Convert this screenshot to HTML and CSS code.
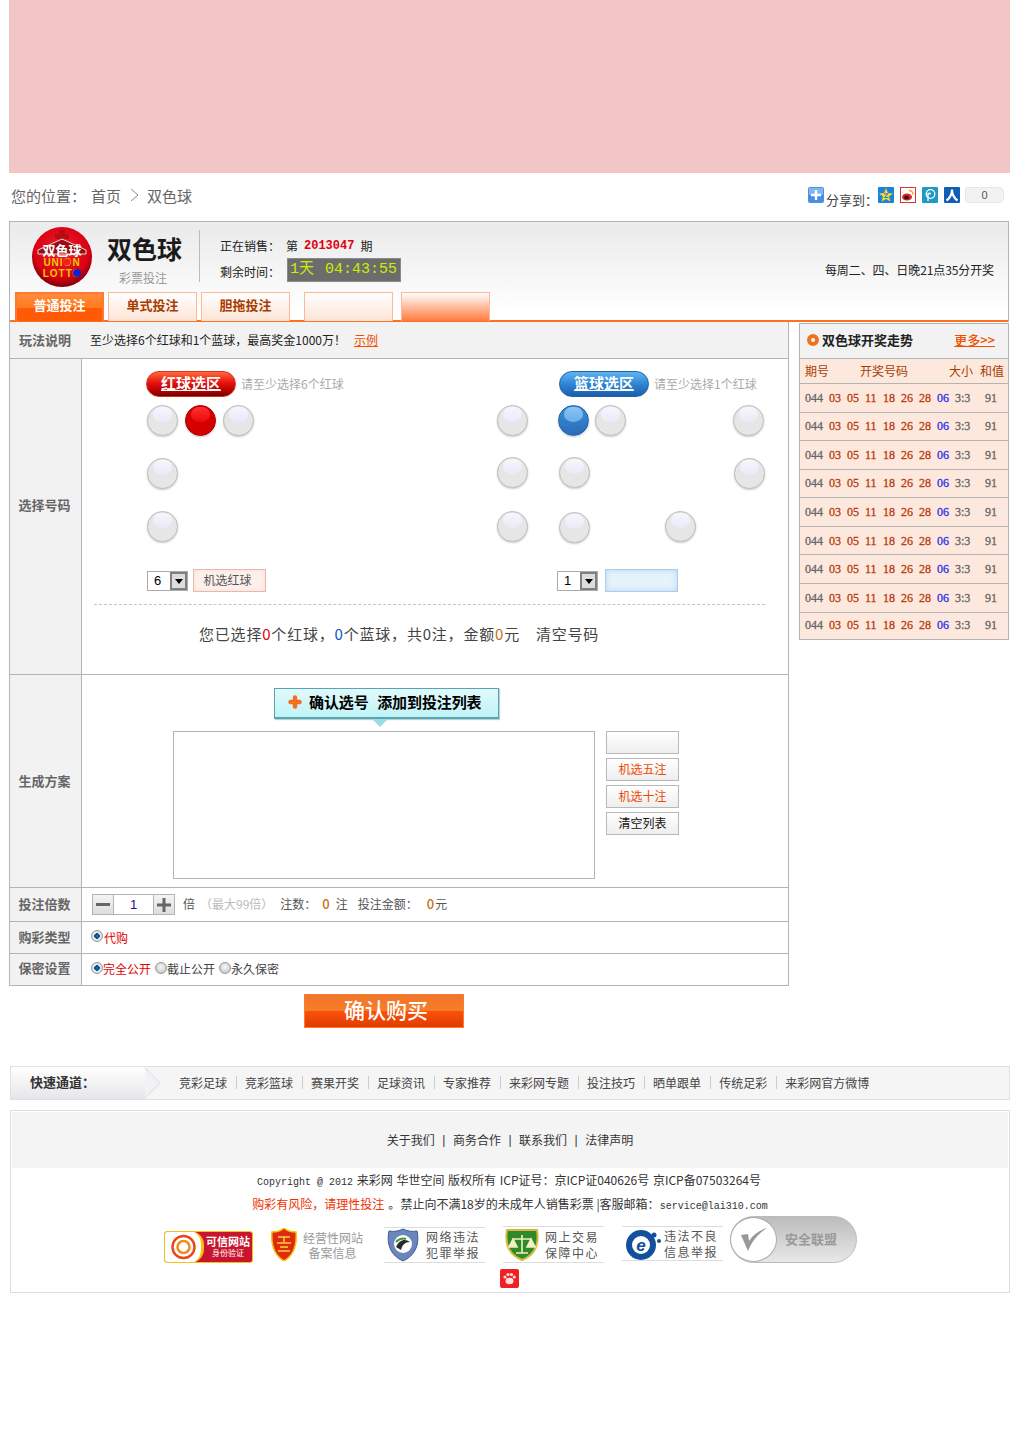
FILE: index.html
```html
<!DOCTYPE html>
<html lang="zh-CN">
<head>
<meta charset="utf-8">
<title>双色球</title>
<link rel="stylesheet" href="styles.css">
</head>
<body>
<div class="wrap">
  <div class="banner"></div>

  <div class="crumbs">
    <div class="path"><span>您的位置：</span><a>首页</a>
      <svg class="chev" width="10" height="14" viewBox="0 0 10 14"><path d="M1 1l7 6-7 6" fill="none" stroke="#888"/></svg>
      <a>双色球</a></div>
    <div class="share">
      <svg class="ico plus" width="16" height="16" viewBox="0 0 16 16"><rect width="16" height="16" rx="2" fill="#4a90e2"/><rect x="1" y="1" width="14" height="7" fill="#7fb6f2"/><path d="M8 3v10M3 8h10" stroke="#fff" stroke-width="2.4"/></svg>
      <span class="share-label">分享到：</span>
      <svg class="ico" width="16" height="16" viewBox="0 0 16 16"><rect width="16" height="16" rx="1" fill="#1c84d8"/><path d="M8 1l2 5 5 .4-4 3.2 1.4 5L8 12l-4.400 2.600L5 9.600 1 6.400 6 6z" fill="#ffd22e"/><path d="M6 6.800h4L6.500 10.500h3.800" fill="none" stroke="#1c84d8"/></svg>
      <svg class="ico" width="16" height="16" viewBox="0 0 16 16"><rect x=".5" y=".5" width="15" height="15" fill="#fff" stroke="#d33"/><ellipse cx="7" cy="10" rx="5" ry="3.600" fill="#e0242c"/><ellipse cx="6.500" cy="10.500" rx="2.500" ry="1.900" fill="#222"/><path d="M9 3.500a4 4 0 0 1 4 4" fill="none" stroke="#f29a1f" stroke-width="1.500"/></svg>
      <svg class="ico" width="16" height="16" viewBox="0 0 16 16"><rect width="16" height="16" rx="1" fill="#1f9ac4"/><circle cx="8.500" cy="7" r="4.300" fill="none" stroke="#fff" stroke-width="1.300"/><path d="M6 14V6.500h3" fill="none" stroke="#fff" stroke-width="1.300"/></svg>
      <svg class="ico" width="16" height="16" viewBox="0 0 16 16"><rect width="16" height="16" rx="1" fill="#0f5fb4"/><path d="M8 2.500C8 8 6 11 2.500 13.500M8 2.500c0 5.500 2 8.500 5.500 11" fill="none" stroke="#fff" stroke-width="2.200"/></svg>
      <span class="count">0</span>
    </div>
  </div>

  <header class="lottery">
    <div class="lottery-top">
      <svg class="logo" width="62" height="62" viewBox="0 0 62 62">
        <defs><radialGradient id="lg" cx=".5" cy=".4" r=".6"><stop offset="0" stop-color="#f2232e"/><stop offset=".75" stop-color="#d90012"/><stop offset="1" stop-color="#7d0008"/></radialGradient></defs>
        <circle cx="31" cy="31" r="30" fill="url(#lg)"/>
        <path d="M28 4h6v4h4v5h-4v4h-6v-4h-4V8h4z" fill="#b80c14"/>
        <path d="M7 24L31 13l24 11v4H7z" fill="#9c0c12" stroke="#ddd"/>
        <text x="31" y="29" class="logo-cn">双色球</text>
        <text x="31" y="40" class="logo-en">UNION</text>
        <text x="31" y="51" class="logo-en">LOTTO</text>
        <circle cx="36" cy="36" r="3.500" fill="#f02020"/>
        <circle cx="46" cy="47" r="4" fill="#1020d0"/>
      </svg>
      <div class="title"><h1>双色球</h1><p>彩票投注</p></div>
      <div class="sale">
        <div class="sale-row"><span class="sale-label">正在销售：</span><span>第</span><b class="issue">2013047</b><span>期</span></div>
        <div class="sale-row"><span class="sale-label">剩余时间：</span><span class="timer">1天 04:43:55</span></div>
      </div>
      <div class="draw">每周二、四、日晚21点35分开奖</div>
    </div>
    <nav class="tabs">
      <a class="tab on">普通投注</a>
      <a class="tab">单式投注</a>
      <a class="tab">胆拖投注</a>
      <a class="tab blank t4"></a>
      <a class="tab fade t5"></a>
    </nav>
  </header>

  <div class="main">
    <section class="form">
      <div class="row r-rule">
        <div class="label">玩法说明</div>
        <div class="cell rule"><span>至少选择6个红球和1个蓝球，最高奖金1000万！</span><a class="link">示例</a></div>
      </div>

      <div class="row r-pick">
        <div class="label">选择号码</div>
        <div class="cell pick">
          <div class="pick-head">
            <div class="pick-title red-title"><span class="pill pill-red">红球选区</span><span class="hint">请至少选择6个红球</span></div>
            <div class="pick-title"><span class="pill pill-blue">篮球选区</span><span class="hint">请至少选择1个红球</span></div>
          </div>
          <div class="balls">
            <i class="ball c1 l1"></i><i class="ball red c2 l1"></i><i class="ball c3 l1"></i><i class="ball c4 l1"></i><i class="ball blue c5 l1"></i><i class="ball c6 l1"></i><i class="ball c8 l1"></i>
            <i class="ball c1 l2"></i><i class="ball c4 l2 up"></i><i class="ball c5 l2 up right"></i><i class="ball c8 l2 right"></i>
            <i class="ball c1 l3"></i><i class="ball c4 l3"></i><i class="ball c5 l3 down right"></i><i class="ball c7 l3"></i>
          </div>
          <div class="controls">
            <div class="control red-control"><span class="select">6<i class="arrow"></i></span><a class="rand">机选红球</a></div>
            <div class="control"><span class="select">1<i class="arrow"></i></span><a class="rand rand-blue"></a></div>
          </div>
          <div class="dash"></div>
          <p class="summary">您已选择<em class="c-red">0</em>个红球，<em class="c-blue">0</em>个蓝球，共0注，金额<em class="c-org">0</em>元<a class="clear">清空号码</a></p>
        </div>
      </div>

      <div class="row r-gen">
        <div class="label">生成方案</div>
        <div class="cell gen">
          <a class="confirm-pick">
            <svg width="14" height="14" viewBox="0 0 14 14"><path d="M7 2.500v9M2.500 7h9" stroke="#f07020" stroke-width="4.500" stroke-linecap="round"/></svg>
            <span>确认选号&nbsp;&nbsp;添加到投注列表</span>
          </a>
          <div class="gen-body">
            <div class="list"></div>
            <div class="gen-btns">
              <a class="gbtn"></a>
              <a class="gbtn org">机选五注</a>
              <a class="gbtn org">机选十注</a>
              <a class="gbtn">清空列表</a>
            </div>
          </div>
        </div>
      </div>

      <div class="row r-mult">
        <div class="label">投注倍数</div>
        <div class="cell mult">
          <div class="stepper">
            <span class="step"><svg width="14" height="4" viewBox="0 0 14 4"><rect width="14" height="3" fill="#666"/></svg></span>
            <span class="num">1</span>
            <span class="step"><svg width="14" height="14" viewBox="0 0 14 14"><path d="M7 0v14M0 7h14" stroke="#666" stroke-width="3"/></svg></span>
          </div>
          <span class="m1">倍</span><span class="m2">（最大99倍）</span><span class="m3">注数：</span><em class="c-org m4">0</em><span class="m5">注</span><span class="m6">投注金额：</span><em class="c-org m7">0</em><span class="m8">元</span>
        </div>
      </div>

      <div class="row r-type">
        <div class="label">购彩类型</div>
        <div class="cell radios"><i class="radio on"></i><span class="c-red">代购</span></div>
      </div>

      <div class="row r-secret">
        <div class="label">保密设置</div>
        <div class="cell radios"><i class="radio on"></i><span class="c-red">完全公开</span><i class="radio gapl"></i><span>截止公开</span><i class="radio gapl"></i><span>永久保密</span></div>
      </div>
    </section>

    <aside class="trend">
      <div class="trend-head">
        <h2><i class="dot"></i>双色球开奖走势</h2><a class="more">更多&gt;&gt;</a>
      </div>
      <div class="trend-cols"><span class="tc1">期号</span><span class="tc2">开奖号码</span><span class="tc3">大小</span><span class="tc4">和值</span></div>
      <div class="trend-rows">
        <div class="tr"><b class="n3">044</b><b>03</b><b>05</b><b>11</b><b>18</b><b>26</b><b>28</b><b class="bl">06</b><b class="n3">3:3</b><b class="sum">91</b></div>
        <div class="tr"><b class="n3">044</b><b>03</b><b>05</b><b>11</b><b>18</b><b>26</b><b>28</b><b class="bl">06</b><b class="n3">3:3</b><b class="sum">91</b></div>
        <div class="tr"><b class="n3">044</b><b>03</b><b>05</b><b>11</b><b>18</b><b>26</b><b>28</b><b class="bl">06</b><b class="n3">3:3</b><b class="sum">91</b></div>
        <div class="tr"><b class="n3">044</b><b>03</b><b>05</b><b>11</b><b>18</b><b>26</b><b>28</b><b class="bl">06</b><b class="n3">3:3</b><b class="sum">91</b></div>
        <div class="tr"><b class="n3">044</b><b>03</b><b>05</b><b>11</b><b>18</b><b>26</b><b>28</b><b class="bl">06</b><b class="n3">3:3</b><b class="sum">91</b></div>
        <div class="tr"><b class="n3">044</b><b>03</b><b>05</b><b>11</b><b>18</b><b>26</b><b>28</b><b class="bl">06</b><b class="n3">3:3</b><b class="sum">91</b></div>
        <div class="tr"><b class="n3">044</b><b>03</b><b>05</b><b>11</b><b>18</b><b>26</b><b>28</b><b class="bl">06</b><b class="n3">3:3</b><b class="sum">91</b></div>
        <div class="tr"><b class="n3">044</b><b>03</b><b>05</b><b>11</b><b>18</b><b>26</b><b>28</b><b class="bl">06</b><b class="n3">3:3</b><b class="sum">91</b></div>
        <div class="tr"><b class="n3">044</b><b>03</b><b>05</b><b>11</b><b>18</b><b>26</b><b>28</b><b class="bl">06</b><b class="n3">3:3</b><b class="sum">91</b></div>
      </div>
    </aside>
  </div>

  <div class="buy-row"><a class="buy">确认购买</a></div>

  <div class="quick">
    <div class="quick-title">快速通道：</div>
    <div class="quick-links">
      <a>竞彩足球</a><a>竞彩篮球</a><a>赛果开奖</a><a>足球资讯</a><a>专家推荐</a><a>来彩网专题</a><a>投注技巧</a><a>晒单跟单</a><a>传统足彩</a><a>来彩网官方微博</a>
    </div>
  </div>

  <footer class="foot">
    <div class="foot-links"><a>关于我们</a><i>|</i><a>商务合作</a><i>|</i><a>联系我们</a><i>|</i><a>法律声明</a></div>
    <p class="copy"><span class="mono">Copyright @ 2012</span> 来彩网 华世空间 版权所有 ICP证号：京ICP证040626号 京ICP备07503264号</p>
    <p class="risk"><span class="risk-red">购彩有风险，请理性投注</span><span class="risk-dot">。</span>禁止向不满18岁的未成年人销售彩票 |客服邮箱：<span class="mono">service@lai310.com</span></p>
    <div class="badges">
      <div class="badge b1">
        <svg width="36" height="32" viewBox="0 0 36 32"><circle cx="19" cy="16" r="11" fill="none" stroke="#e8481c" stroke-width="2.500"/><circle cx="19" cy="16" r="6" fill="none" stroke="#f28a1e" stroke-width="2.500"/></svg>
        <div class="b1-text"><b>可信网站</b><span>身份验证</span></div>
      </div>
      <div class="badge b2">
        <svg width="26" height="33" viewBox="0 0 26 33"><path d="M13 0c3 3 7 4 12 4 1 12-2 23-12 29C3 27 0 16 1 4c5 0 9-1 12-4z" fill="#e02a10" stroke="#f4c000" stroke-width="1.500"/><path d="M7 9h12M13 9v5M6 15h14M9 19h8M7 23h12" stroke="#f8d040" stroke-width="1.500"/></svg>
        <div class="b-text grey">经营性网站<br>备案信息</div>
      </div>
      <div class="badge b3 ruled">
        <svg width="34" height="34" viewBox="0 0 34 34"><path d="M17 1c4 2 9 3 14 2 3 13-2 25-14 30C5 28 0 16 3 3c5 1 10 0 14-2z" fill="#6a86bc" stroke="#3d5a96"/><circle cx="17" cy="16" r="9" fill="#fff"/><path d="M10 19c3-7 9-9 14-5-5 0-8 3-9 8z" fill="#2a2a2a"/><path d="M10 14c3-3 7-4 10-3" stroke="#3a9a30" stroke-width="2" fill="none"/></svg>
        <div class="b-text">网络违法<br>犯罪举报</div>
      </div>
      <div class="badge b4 ruled">
        <svg width="34" height="34" viewBox="0 0 34 34"><path d="M2 2h30c2 12 0 24-15 30C2 26 0 14 2 2z" fill="#2f8a2a" stroke="#d8b840" stroke-width="2"/><path d="M17 7v18M8 11h18M11 25h12M8 11l-4 8h8zM26 11l-4 8h8z" stroke="#f4f0c0" stroke-width="1.600" fill="#f4f0c0"/></svg>
        <div class="b-text">网上交易<br>保障中心</div>
      </div>
      <div class="badge b5 ruled">
        <svg width="38" height="34" viewBox="0 0 38 34"><circle cx="17" cy="18" r="15" fill="#12509e"/><circle cx="17" cy="18" r="9" fill="#fff"/><text x="17" y="24" class="b5-e">e</text><circle cx="30" cy="8" r="2.500" fill="#12509e"/><circle cx="35" cy="14" r="2" fill="#12509e"/></svg>
        <div class="b-text">违法不良<br>信息举报</div>
      </div>
      <div class="badge b6">
        <div class="b6-knob"><svg width="30" height="26" viewBox="0 0 30 26"><path d="M2 8l7 16C13 14 20 6 28 1 20 3 14 8 10 14L9 7z" fill="#999"/></svg></div>
        <b>安全联盟</b>
      </div>
    </div>
    <div class="paw-row">
      <svg class="paw" width="19" height="19" viewBox="0 0 19 19"><rect width="19" height="19" rx="2" fill="#ee2222"/><ellipse cx="9.500" cy="12" rx="4" ry="3.200" fill="#fdd"/><circle cx="5" cy="8" r="1.600" fill="#fdd"/><circle cx="8" cy="5.500" r="1.600" fill="#fdd"/><circle cx="11.500" cy="5.500" r="1.600" fill="#fdd"/><circle cx="14.300" cy="8" r="1.600" fill="#fdd"/></svg>
    </div>
  </footer>
</div>
</body>
</html>
```

FILE: styles.css
```css
* { box-sizing: border-box; }
html, body { margin: 0; padding: 0; }
body { background: #fff; color: #333; font: 12px/1.4 "Noto Sans CJK SC", "Liberation Sans", sans-serif; min-height: 1455px; }
a { color: inherit; text-decoration: none; }
em, i { font-style: normal; }
h1, h2, p { margin: 0; }
svg { display: block; flex: none; }

.wrap { width: 1000px; margin-left: 9px; }
.banner { width: 1001px; height: 173px; background: #f2c6c7; }

/* breadcrumb */
.crumbs { height: 48px; display: flex; justify-content: space-between; position: relative; }
.path { display: flex; align-items: center; height: 44px; padding-left: 2px; font-size: 15px; color: #666; }
.path a { margin-left: 5px; }
.path a:last-child { margin-left: 0; }
.chev { margin: 0 7px 0 9px; }
.share { display: flex; align-items: flex-start; padding-top: 14px; padding-right: 5px; }
.ico { margin-right: 6px; }
.plus { margin-right: 2px; }
.share-label { font-size: 13px; line-height: 16px; margin-top: 5px; margin-right: 10px; color: #444; width: 42px; white-space: nowrap; }
.count { width: 39px; height: 16px; margin-left: -1px; border-radius: 3px 5px 5px 3px; background: #f2f2f2; border: 1px solid #e6e6e6; text-align: center; line-height: 14px; color: #555; font: 11px/14px "Liberation Sans", sans-serif; }

/* lottery header */
.lottery { height: 101px; border: 1px solid #b4b4b4; border-bottom: 0; background: linear-gradient(#ececec 10%, #fff 90%); display: flex; flex-direction: column; }
.lottery-top { height: 70px; display: flex; align-items: flex-start; position: relative; }
.logo { margin: 4px 0 0 21px; }
.logo-cn { font: bold 13px "Noto Sans CJK SC", sans-serif; fill: #fff; text-anchor: middle; }
.logo-en { font: bold 10px "Liberation Sans", sans-serif; fill: #f4c800; text-anchor: middle; letter-spacing: 1px; }
.title { width: 93px; margin-left: 14px; border-right: 1px solid #bbb; height: 52px; margin-top: 8px; flex: none; }
.title h1 { font-size: 25px; font-weight: 700; line-height: 36px; color: #1a1a1a; white-space: nowrap; }
.title p { font-size: 12px; line-height: 16px; margin-top: 4px; padding-left: 12px; color: #999; }
.sale { margin: 11px 0 0 20px; color: #222; }
.sale-row { display: flex; align-items: center; height: 26px; }
.sale-label { width: 66px; }
.issue { font: bold 12px "Liberation Mono", monospace; color: #e00012; margin: 0 6px 0 6px; }
.timer { width: 114px; height: 24px; margin: 0 0 4px 1px; background: #6c6c6c; border: 1px solid #8a8a8a; color: #c8f000; font: 15px/22px "Liberation Mono", "Noto Sans CJK SC", monospace; padding-left: 2px; white-space: nowrap; word-spacing: 2px; }
.draw { position: absolute; right: 14px; top: 40px; color: #222; letter-spacing: -.1px; }

.tabs { height: 30px; padding-left: 5px; display: flex; gap: 4px; border-bottom: 2px solid #ff7020; }
.tab { width: 89px; height: 29px; border: 1px solid #ffb896; border-bottom: 0; background: linear-gradient(#fff, #fde4d6); color: #a83c00; font-weight: 700; font-size: 13px; text-align: center; line-height: 24px; }
.tab.on { background: linear-gradient(#ff8c3a, #ff7a20 50%, #ff5a05 50%, #ff5a05); color: #fff; border: 2px solid #ff7a30; border-bottom: 0; line-height: 22px; }
.t4 { margin-left: 10px; }
.t5 { margin-left: 4px; background: linear-gradient(#fff, #ff7a3e); }

/* layout */
.main { display: flex; align-items: flex-start; gap: 10px; }
.form { width: 780px; border: 1px solid #b4b4b4; border-top: 0; }
.trend { width: 210px; margin-top: 1px; border: 1px solid #b4b4b4; }
.row { display: grid; grid-template-columns: 72px 1fr; border-bottom: 1px solid #b4b4b4; }
.row:last-child { border-bottom: 0; }
.label { background: #f2f2f2; border-right: 1px solid #b4b4b4; display: flex; align-items: center; justify-content: center; font-size: 13px; font-weight: 700; color: #666; padding-right: 2px; }
.r-rule { height: 37px; background: #f2f2f2; }
.r-rule .label { border-right: 0; padding-top: 1px; }
.r-pick { height: 316px; }
.r-pick .label { padding-bottom: 22px; }
.r-gen { height: 213px; }
.r-mult { height: 34px; }
.r-type { height: 32px; }
.r-secret { height: 31px; }
.r-secret .label { padding-bottom: 3px; }

.rule { display: flex; align-items: center; padding: 1px 0 0 8px; color: #222; }
.link { margin-left: 8px; color: #f05000; text-decoration: underline; }

/* number picking */
.pick { padding-top: 12px; padding-left: 64px; }
.pick-head { display: flex; height: 26px; }
.pick-title { display: flex; align-items: center; }
.red-title { width: 413px; }
.pill { width: 90px; height: 26px; border-radius: 13px; text-align: center; color: #fff; font-size: 15px; font-weight: 700; line-height: 22px; text-decoration: underline; text-decoration-thickness: 1px; text-underline-offset: 1px; }
.pill-red { background: linear-gradient(#ff6a3a, #e81010 45%, #b00000 80%, #700000); border: 1px solid #d8301a; }
.pill-blue { background: linear-gradient(#62b4f0, #2f86d4 50%, #1c5cac); border: 1px solid #1e62a8; }
.hint { margin-left: 5px; color: #aaa; }

.balls { display: grid; grid-template-columns: 38px 38px 274px 61px 37px 70px 68px 40px; grid-auto-rows: 53px; margin: 8px 0 0 1px; }
.ball { position: relative; width: 31px; height: 31px; border-radius: 50%; border: 1px solid #c0c0c0; background: #e6e6e6; box-shadow: 0 1px 2px #ccc; }
.ball::before { content: ""; position: absolute; left: 5px; top: 1px; width: 19px; height: 15px; border-radius: 8px 8px 50% 50%; background: linear-gradient(#f6f6fc, #e8eaf8); }
.ball.red { background: #d40000; border-color: #b00000; }
.ball.red::before { background: linear-gradient(#ff3030, #f00808); }
.ball.blue { background: linear-gradient(#3a90dc, #2a6cb8); border-color: #1f5fa8; }
.ball.blue::before { background: linear-gradient(#8cc4f0, #68aee8); }
.c1 { grid-column: 1; } .c2 { grid-column: 2; } .c3 { grid-column: 3; } .c4 { grid-column: 4; }
.c5 { grid-column: 5; } .c6 { grid-column: 6; } .c7 { grid-column: 7; } .c8 { grid-column: 8; }
.l1 { grid-row: 1; } .l2 { grid-row: 2; } .l3 { grid-row: 3; }
.up { margin-top: -1px; }
.down { margin-top: 1px; }
.right { margin-left: 1px; }

.controls { display: flex; margin: 5px 0 0 1px; height: 23px; }
.control { display: flex; align-items: center; gap: 5px; }
.red-control { width: 410px; }
.control + .control { gap: 7px; }
.select { width: 41px; height: 20px; border: 1px solid #aaa; background: #fff; padding-left: 6px; font: 13px/18px "Liberation Sans", sans-serif; color: #000; position: relative; }
.arrow { position: absolute; right: 0; top: 0; width: 17px; height: 18px; background: #ddd; border: 2px solid #808080; }
.arrow::after { content: ""; position: absolute; left: 3px; top: 5px; border: 4px solid transparent; border-top: 5px solid #000; border-bottom: 0; }
.rand { width: 73px; height: 23px; border: 1px solid #e8b8a8; background: #fdf0ec; box-shadow: inset 0 0 4px #fbdcd2; text-align: center; line-height: 20px; color: #555; padding-right: 4px; }
.rand-blue { border-color: #a8cff0; background: #e6f2fc; box-shadow: inset 0 0 6px #b8d8f4; }
.dash { margin: 12px 0 0 -52px; width: 671px; border-top: 1px dashed #c4c4c4; height: 1px; }
.summary { margin: 18px 0 0 53px; color: #444; font-size: 15px; line-height: 22px; letter-spacing: .8px; white-space: nowrap; }
.c-red { color: #e00000; }
.c-blue { color: #1050d0; }
.c-org { color: #c87010; }
.clear { margin-left: 16px; }

/* scheme */
.gen { padding: 13px 0 0 91px; }
.confirm-pick { position: relative; width: 225px; height: 31px; margin-left: 101px; display: flex; align-items: center; gap: 7px; padding: 0 0 3px 13px; border: 1px solid #4fa8b8; border-width: 1px 1px 2px; background: linear-gradient(#e2f9fb, #c0f3f6); box-shadow: 1px 1px 1px #ccc; color: #000; font-size: 15px; font-weight: 700; white-space: nowrap; letter-spacing: -.1px; word-spacing: 1px; }
.confirm-pick::after { content: ""; position: absolute; left: 97px; bottom: -10px; width: 0; height: 0; border: 8px solid transparent; border-top: 8px solid #9adbe4; border-bottom: 0; }
.gen-body { display: flex; gap: 11px; margin-top: 12px; }
.list { width: 422px; height: 148px; border: 1px solid #b4b4b4; background: #fff; }
.gen-btns { display: flex; flex-direction: column; gap: 4px; }
.gbtn { width: 73px; height: 23px; border: 1px solid #b8b8b8; background: linear-gradient(#fff, #eee); text-align: center; line-height: 20px; color: #111; }
.gbtn.org { color: #f04800; }

/* multiple */
.mult { display: flex; align-items: center; padding-left: 10px; color: #555; white-space: nowrap; }
.stepper { width: 83px; height: 21px; border: 1px solid #b4b4b4; display: flex; margin-right: 8px; }
.step { width: 20px; background: linear-gradient(#f4f4f4, #ddd); display: flex; align-items: center; justify-content: center; }
.num { flex: 1; border: 1px solid #b4b4b4; border-width: 0 1px; text-align: center; color: #20108a; font: 13px/19px "Liberation Sans", sans-serif; }
.m2 { color: #bbb; margin-left: 5px; }
.m3 { margin-left: 7px; }
.m4 { margin-left: 6px; font-size: 13px; font-weight: 500; }
.m5 { margin-left: 6px; }
.m6 { margin-left: 10px; }
.m7 { margin-left: 9px; font-size: 13px; font-weight: 500; }
.m8 { margin-left: 1px; }

.radios { display: flex; align-items: center; padding-left: 9px; color: #444; }
.radios span { position: relative; top: 1px; }
.radio { width: 12px; height: 12px; border-radius: 50%; border: 1px solid #999; background: radial-gradient(circle at 50% 40%, #f8f8f8, #bbb); margin-top: -4px; }
.radio.on { background: radial-gradient(circle, #1470b0 0, #0a4c90 38%, #eee 42%, #ccc 100%); }
.r-type .radio { margin-right: 1px; }
.r-secret.row .radios span { top: 0; }
.gapl { margin-left: 4px; }

/* trend */
.trend-head { height: 35px; background: #f2f2f2; border-bottom: 1px solid #b4b4b4; display: flex; align-items: center; justify-content: space-between; padding: 0 13px 2px 7px; }
.trend-head h2 { display: flex; align-items: center; gap: 3px; font-size: 13px; font-weight: 700; color: #222; white-space: nowrap; }
.dot { width: 12px; height: 12px; border-radius: 50%; background: #fff; border: 4px solid #f07020; }
.more { color: #f05000; text-decoration: underline; font-size: 13px; font-weight: 500; }
.trend-cols { height: 25px; background: #fde8dd; border-bottom: 1px solid #b4b4b4; display: flex; align-items: center; padding-left: 5px; color: #a83c00; white-space: nowrap; }
.tc2 { margin-left: 31px; }
.tc3 { margin-left: 41px; }
.tc4 { margin-left: 7px; }
.trend-rows { height: 255px; display: flex; flex-direction: column; background: #fde8dd; }
.tr { flex: 1; display: flex; align-items: center; gap: 6px; padding: 1px 0 0 5px; border-bottom: 1px solid #b4b4b4; font: 12px "Liberation Serif", serif; color: #b83c10; }
.tr:last-child { border-bottom: 0; padding-top: 0; }
.tr b { width: 12px; font-weight: 400; -webkit-text-stroke: .3px currentColor; white-space: nowrap; }
.tr .n3 { width: 18px; color: #666; }
.tr .bl { color: #3030e8; }
.tr .sum { margin-left: 6px; color: #666; }

/* buy */
.buy-row { padding: 8px 0 0 295px; height: 80px; }
.buy { display: block; width: 160px; height: 34px; padding-left: 4px; border: 1px solid #ff7a30; background: linear-gradient(#f0762c, #f87c28 50%, #fa5208 50%, #e03c00); color: #fff; font-size: 21px; font-weight: 500; line-height: 29px; text-align: center; }

/* quick links */
.quick { width: 1000px; margin-left: 1px; height: 34px; border: 1px solid #e0e0e8; background: #f5f5f5; display: flex; align-items: center; position: relative; }
.quick-title { position: relative; width: 134px; height: 32px; padding-left: 19px; background: linear-gradient(#fff, #e6e6ea); font-size: 13px; font-weight: 700; line-height: 30px; color: #333; }
.quick-title::after { content: ""; position: absolute; left: 134px; top: 0; width: 0; height: 0; border: 16px solid transparent; border-left: 16px solid #e4e4ea; border-right: 0; }
.quick-title::before { content: ""; position: absolute; z-index: 1; left: 134px; top: 2px; width: 0; height: 0; border: 14px solid transparent; border-left: 14px solid #f2f2f5; border-right: 0; }
.quick-links { display: flex; margin: 0 0 2px 34px; color: #444; white-space: nowrap; }
.quick-links a { padding-right: 9px; margin-right: 8px; border-right: 1px solid #ccc; line-height: 13px; }
.quick-links a:last-child { border-right: 0; }

/* footer */
.foot { width: 1000px; margin-left: 1px; margin-top: 10px; height: 183px; border: 1px solid #dcdce4; padding: 1px; text-align: center; color: #333; }
.foot-links { height: 56px; background: #f4f4f4; display: flex; align-items: center; justify-content: center; gap: 7.5px; color: #333; }
.foot-links i { font-family: "Liberation Sans", sans-serif; color: #333; }
.copy { margin-top: 3px; line-height: 18px; white-space: nowrap; padding-right: 2px; word-spacing: 1px; }
.risk { margin-top: 6px; line-height: 18px; white-space: nowrap; }
.mono { font: 10px "Liberation Mono", monospace; word-spacing: 0; }
.risk-red { color: #f03000; }
.risk-dot { margin: 0 0 0 4px; }

.badges { display: flex; align-items: flex-end; height: 47px; margin-top: 3px; padding-left: 152px; text-align: left; }
.badge { display: flex; align-items: center; flex: none; }
.b1 { width: 89px; height: 32px; border: 1px solid #f4c020; border-radius: 3px; background: #c8142c; margin-right: 18px; overflow: hidden; }
.b1 svg { background: #fff; border-right: 3px solid #f8c010; border-radius: 0 14px 14px 0; margin-left: -1px; width: 40px; }
.b1-text { color: #fff; display: flex; flex-direction: column; align-items: center; flex: 1; line-height: 12px; }
.b1-text b { font-size: 11px; }
.b1-text span { font-size: 8px; }
.b2 { margin: 0 22px 2px 0; gap: 6px; }
.b-text { font-size: 12px; letter-spacing: 1.5px; line-height: 16px; color: #555; text-align: center; white-space: nowrap; }
.b-text.grey { letter-spacing: 0; line-height: 15px; color: #999; width: 59px; }
.ruled { width: 101px; height: 36px; border: 1px solid #ddd; border-width: 1px 0; padding: 0 5px 0 2px; justify-content: space-between; }
.b3 { margin-right: 18px; background: #fff; }
.b4 { margin-right: 18px; height: 37px; }
.b5 { margin-right: 7px; margin-bottom: 2px; height: 35px; }
.b5-e { font: italic bold 17px "Liberation Sans", sans-serif; fill: #12509e; text-anchor: middle; }
.b6 { width: 127px; height: 47px; border-radius: 24px; border: 1px solid #bbb; background: linear-gradient(#bcbcbc, #e8e8e8); }
.b6-knob { width: 47px; height: 45px; border-radius: 50%; background: #fff; border: 1px solid #aaa; display: flex; align-items: center; justify-content: center; margin-left: -1px; }
.b6 b { margin-left: 8px; font-size: 13px; color: #999; white-space: nowrap; }
.paw-row { display: flex; padding: 6px 0 0 488px; }
```
